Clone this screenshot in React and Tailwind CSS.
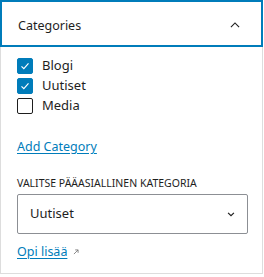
import React from "react";

const Check = ({ checked, label }) => (
  <label className="flex items-center gap-[9px] h-5">
    <span
      className={
        "w-4 h-4 flex items-center justify-center rounded-[2px] " +
        (checked ? "bg-[#007cba] border border-[#007cba]" : "border border-[#1e1e1e] bg-white")
      }
    >
      {checked && (
        <svg width="14" height="14" viewBox="0 0 24 24" fill="none">
          <path d="M6 12.5l4 4 8-9" stroke="white" strokeWidth="2" />
        </svg>
      )}
    </span>
    <span className="text-[13px] text-[#1e1e1e]">{label}</span>
  </label>
);

const App = () => {
  return (
    <div className="w-[264px] h-[277px] bg-white" style={{ fontFamily: '"Noto Sans", "Open Sans", sans-serif' }}>
      <div className="w-[263px] h-[274px] border-l border-r border-b border-[#dddddd] flex flex-col">
        <div className="-ml-px w-[263px] h-[47px] border-2 border-[#007cba] flex items-center justify-between pl-4 pr-[19px]">
          <span className="text-[12.5px] text-[#1e1e1e] mt-[5px]">Categories</span>
          <svg width="14" height="14" viewBox="0 0 24 24" fill="none" className="mt-[2px]">
            <path d="M5 15.5l7-7 7 7" stroke="#1e1e1e" strokeWidth="2" />
          </svg>
        </div>
        <div className="flex flex-col pl-4 pt-[9px]">
          <Check checked label="Blogi" />
          <Check checked label="Uutiset" />
          <Check label="Media" />
          <a className="mt-[21px] text-[12.5px] text-[#007cba] underline underline-offset-2 leading-5">Add Category</a>
          <div className="mt-[18px] text-[10.5px] text-[#1e1e1e] uppercase leading-4">Valitse pääasiallinen kategoria</div>
          <div className="mt-[3px] w-[231px] h-[40px] border border-[#8c8f94] rounded-[2px] flex items-center justify-between pl-3 pr-[9px]">
            <span className="text-[13px] text-[#1e1e1e]">Uutiset</span>
            <svg width="14" height="14" viewBox="0 0 24 24" fill="none">
              <path d="M7 10l5 5 5-5" stroke="#1e1e1e" strokeWidth="2" />
            </svg>
          </div>
          <div className="mt-[8px] flex items-center gap-[4px] text-[12.5px] leading-5">
            <a className="text-[#007cba] underline underline-offset-2">Opi lisää</a>
            <svg width="10" height="10" viewBox="0 0 24 24" fill="none">
              <path d="M7 17L17 7M10 7h7v7" stroke="#757575" strokeWidth="2" />
            </svg>
          </div>
        </div>
      </div>
    </div>
  );
};

export default App;
